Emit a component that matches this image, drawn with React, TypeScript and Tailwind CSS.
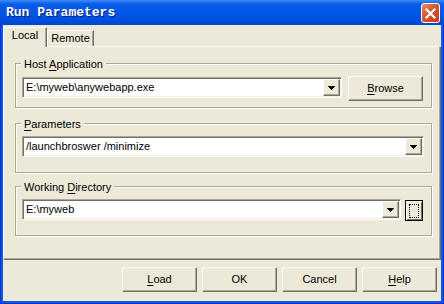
import React from "react";

const raised =
  "bg-[#ece9d8] border border-t-white border-l-white border-r-[#716f64] border-b-[#716f64] shadow-[inset_-1px_-1px_0_#aca899]";

const Btn = ({ children, className = "" }: { children: React.ReactNode; className?: string }) => (
  <button className={`${raised} w-[75px] h-[25px] flex items-center justify-center text-[11px] leading-[13px] text-black ${className}`}>
    {children}
  </button>
);

const Arrow = () => (
  <svg width="7" height="4" viewBox="0 0 7 4" shapeRendering="crispEdges">
    <polygon points="0,0 7,0 3.5,4" fill="#000" />
  </svg>
);

const Combo = ({ value, className = "" }: { value: string; className?: string }) => (
  <div
    className={`h-[21px] flex p-[1px] bg-white border border-t-[#aca899] border-l-[#aca899] border-r-white border-b-white shadow-[inset_1px_1px_0_#716f64,inset_-1px_-1px_0_#f1efe2] ${className}`}
  >
    <span className="flex-1 pl-[2px] text-[11px] leading-[17px] text-black whitespace-nowrap overflow-hidden">{value}</span>
    <div className={`${raised} w-[17px] h-full flex items-center justify-center`}>
      <Arrow />
    </div>
  </div>
);

const Group = ({
  label,
  className = "",
  children,
}: {
  label: React.ReactNode;
  className?: string;
  children: React.ReactNode;
}) => (
  <div
    className={`relative ml-[11px] mr-[7px] border border-[#aca899] shadow-[inset_1px_1px_0_white,1px_1px_0_white] pt-[12px] pl-[6px] pr-[7px] ${className}`}
  >
    <span className="absolute -top-[6px] left-[5px] px-[3px] bg-[#ece9d8] text-[11px] leading-[13px] text-black whitespace-nowrap">
      {label}
    </span>
    {children}
  </div>
);

export default function App() {
  return (
    <div className="w-[444px] h-[304px] flex flex-col bg-[#0a5ae6] border-x border-b border-[#0831d9] font-['Liberation_Sans',Arial,sans-serif] select-none">
      {/* title bar */}
      <div className="h-[25px] -mx-[1px] flex items-start bg-[linear-gradient(to_bottom,#3d8ef7_0%,#0a5ce8_16%,#0055e5_60%,#0046d2_100%)]">
        <span className="ml-[6px] mt-[5px] font-['Liberation_Mono',monospace] font-bold text-[13px] leading-[15px] text-white [text-shadow:1px_1px_0_#0a1883]">
          Run Parameters
        </span>
        <div className="ml-auto mr-[4px] mt-[3px] w-[19px] h-[20px] rounded-[3px] border border-white bg-[linear-gradient(135deg,#ec8a6c_0%,#d9552f_45%,#c13a18_100%)] flex items-center justify-center">
          <svg width="11" height="11" viewBox="0 0 11 11">
            <path d="M1.5 1.5 L9.5 9.5 M9.5 1.5 L1.5 9.5" stroke="#fff" strokeWidth="2.2" strokeLinecap="square" />
          </svg>
        </div>
      </div>

      {/* body */}
      <div className="flex-1 mx-[2px] mb-[2px] bg-[#ece9d8] flex flex-col">
        <div className="h-[21px] flex items-start">
          <div className="relative z-10 mt-[2px] h-[20px] w-[44px] bg-[#ece9d8] border-t border-l border-white border-r border-r-[#716f64] shadow-[inset_-1px_0_0_#aca899] flex justify-center pt-[1px] text-[11px] leading-[13px] text-black">
            Local
          </div>
          <div className="mt-[5px] h-[16px] w-[47px] border-t border-l border-white border-r border-r-[#716f64] shadow-[inset_-1px_0_0_#aca899] flex justify-center text-[11px] leading-[13px] text-black pt-[1px]">
            Remote
          </div>
        </div>

        <div className="h-[213px] mr-[1px] border-t border-l border-white border-r border-b border-r-[#aca899] border-b-[#aca899] shadow-[1px_1px_0_#716f64] flex flex-col">
          <Group
            className="mt-[16px] h-[45px] flex items-start gap-[6px]"
            label={
              <>
                Host <u className="underline-offset-[2px]">A</u>pplication
              </>
            }
          >
            <Combo value="E:\myweb\anywebapp.exe" className="mt-[1px] w-[320px]" />
            <Btn>
              <span>
                <u className="underline-offset-[2px]">B</u>rowse
              </span>
            </Btn>
          </Group>

          <Group
            className="mt-[15px] h-[50px]"
            label={
              <>
                <u className="underline-offset-[2px]">P</u>arameters
              </>
            }
          >
            <Combo value="/launchbroswer /minimize" />
          </Group>

          <Group
            className="mt-[13px] h-[50px] flex items-start gap-[4px]"
            label={
              <>
                Working <u className="underline-offset-[2px]">D</u>irectory
              </>
            }
          >
            <Combo value="E:\myweb" className="w-[379px]" />
            <button className="mt-[1px] w-[18px] h-[21px] bg-[#ece9d8] border border-black shadow-[inset_1px_1px_0_white,inset_-1px_-1px_0_#716f64] flex items-center justify-center">
              <div className="w-[10px] h-[14px] border border-dotted border-black" />
            </button>
          </Group>
        </div>

        <div className="flex justify-end gap-[5px] pt-[8px] pr-[4px]">
          <Btn>
            <span>
              <u className="underline-offset-[2px]">L</u>oad
            </span>
          </Btn>
          <Btn>OK</Btn>
          <Btn>Cancel</Btn>
          <Btn>
            <span>
              <u className="underline-offset-[2px]">H</u>elp
            </span>
          </Btn>
        </div>
      </div>
    </div>
  );
}
